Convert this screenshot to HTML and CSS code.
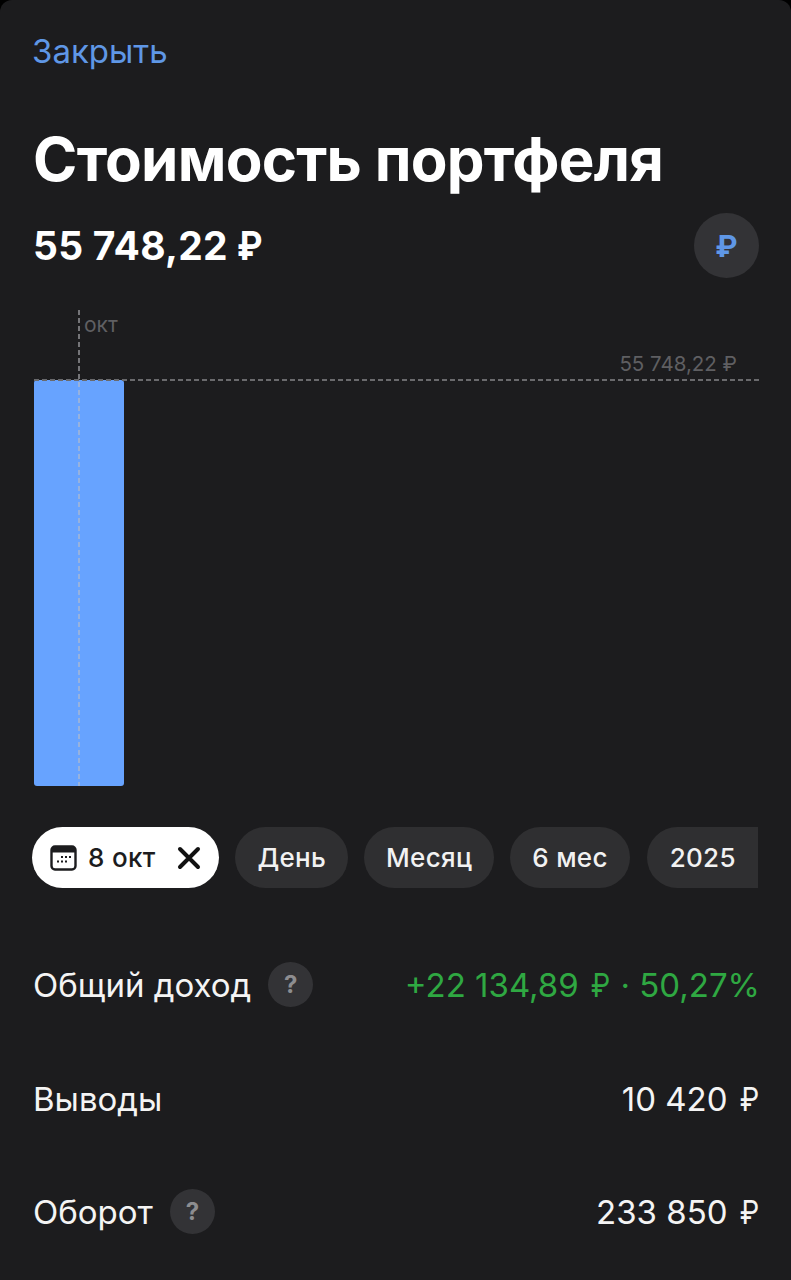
FILE: index.html
```html
<!DOCTYPE html>
<html lang="ru">
<head>
<meta charset="utf-8">
<title>Стоимость портфеля</title>
<link rel="stylesheet" href="styles.css">
</head>
<body>
<main class="sheet">
  <a class="close">Закрыть</a>
  <h1 class="title">Стоимость портфеля</h1>
  <div class="value-row">
    <div class="value">55 748,22 <span class="rub">₽</span></div>
    <div class="currency">₽</div>
  </div>
  <section class="chart">
    <div class="month">окт</div>
    <div class="level">55 748,22 ₽</div>
    <div class="bar"></div>
    <div class="vline"></div>
    <div class="hline"></div>
  </section>
  <nav class="pills">
    <div class="pill pill-active">
      <svg class="cal" viewBox="0 0 27 26" width="27" height="26" aria-hidden="true">
        <rect x="1.500" y="1.500" width="24" height="23" rx="3.500" fill="none" stroke="#1c1c1e" stroke-width="2.400"/>
        <path d="M2 5a3 3 0 0 1 3-3h17a3 3 0 0 1 3 3v2.500H2z" fill="#1c1c1e"/>
        <g fill="#1c1c1e"><rect x="11" y="11" width="2" height="2"/><rect x="15" y="11" width="2" height="2"/><rect x="19" y="11" width="2" height="2"/><rect x="7" y="15.500" width="2" height="2"/><rect x="11" y="15.500" width="2" height="2"/><rect x="15" y="15.500" width="2" height="2"/></g>
      </svg>
      <span>8 окт</span>
      <svg class="x" viewBox="0 0 24 24" width="24" height="24" aria-hidden="true"><path d="M3 3l18 18M21 3L3 21" stroke="#111" stroke-width="4" stroke-linecap="round" fill="none"/></svg>
    </div>
    <div class="pill">День</div>
    <div class="pill">Месяц</div>
    <div class="pill">6 мес</div>
    <div class="pill pill-last">2025</div>
  </nav>
  <section class="rows">
    <div class="row">
      <div class="label">Общий доход <span class="hint">?</span></div>
      <div class="amount amount-up">+22 134,89 <span class="rub">₽</span> · 50,27%</div>
    </div>
    <div class="row">
      <div class="label">Выводы</div>
      <div class="amount">10 420 <span class="rub">₽</span></div>
    </div>
    <div class="row">
      <div class="label">Оборот <span class="hint">?</span></div>
      <div class="amount">233 850 <span class="rub">₽</span></div>
    </div>
  </section>
</main>
</body>
</html>
```
FILE: styles.css
```css
* { box-sizing: border-box; }
html, body { margin: 0; background: #000; }
body { font-family: Inter, "Noto Sans", sans-serif; width: 791px; height: 1280px; overflow: hidden; }
.sheet { height: 1280px; background: #1c1c1e; border-radius: 12px 12px 0 0; padding: 32px 32px 0 34px; color: #fff; }
.close { display: block; color: #5f97e6; font-size: 33px; line-height: 38px; margin-left: -2px; }
.title { margin: 53px 0 0 -1px; font-size: 60px; line-height: 72px; font-weight: 700; letter-spacing: -0.75px; }
.value-row { display: flex; justify-content: space-between; align-items: center; margin-top: 18px; height: 65px; }
.value { font-size: 39px; font-weight: 700; letter-spacing: 0.25px; margin-left: -1px; }
.rub { display: inline-block; }
.value .rub { transform: scaleX(.88); transform-origin: left center; }
.currency { width: 65px; height: 65px; border-radius: 50%; background: #333336; color: #5f97e6; display: flex; align-items: center; justify-content: center; font-size: 30px; font-weight: 700; }
.chart { position: relative; height: 508px; margin-top: 32px; }
.bar { position: absolute; left: 0; top: 70px; width: 90px; height: 406px; background: #67a3ff; border-radius: 3px; }
.vline { position: absolute; left: 44px; top: 0; width: 2px; height: 476px; background: repeating-linear-gradient(to bottom, rgba(190, 190, 195, .55) 0 5px, transparent 5px 8px); }
.hline { position: absolute; left: 0; right: 0; top: 69px; height: 2px; background: repeating-linear-gradient(to right, #6a6a6d 0 5px, transparent 5px 8px); }
.month { position: absolute; left: 50px; top: 3px; font-size: 21px; line-height: 24px; color: #5f5f62; }
.level { position: absolute; right: 22px; top: 42px; font-size: 20.500px; line-height: 24px; color: #5f5f62; }
.pills { display: flex; gap: 16px; margin: 9px 0 0 -2px; height: 61px; overflow: hidden; }
.pill { flex: none; height: 61px; padding: 0 22px; border-radius: 31px; background: #2f2f31; color: #f2f2f2; display: flex; align-items: center; font-size: 26px; font-weight: 550; letter-spacing: 0.3px; }
.pill-active { background: #fff; color: #1c1c1e; padding: 0 18px; gap: 11px; }
.x { margin-left: 11px; }
.pill-last { width: 111px; margin-left: 1px; padding: 0 23px; border-radius: 31px 0 0 31px; }
.rows { margin-top: 63px; display: flex; flex-direction: column; gap: 45.500px; }
.row { display: flex; justify-content: space-between; align-items: center; height: 68px; }
.label { display: flex; align-items: center; gap: 17px; font-size: 33px; color: #f4f4f4; margin-left: -1px; }
.hint { width: 45px; height: 45px; margin-bottom: 2px; border-radius: 50%; background: #333336; color: #8d8d90; display: flex; align-items: center; justify-content: center; font-size: 24px; font-weight: 700; }
.amount { font-size: 33px; color: #f4f4f4; margin-right: -1px; }
.amount .rub { transform: translateX(-1px) scaleX(.84); transform-origin: right center; }
.amount-up { color: #2fa842; }
```
